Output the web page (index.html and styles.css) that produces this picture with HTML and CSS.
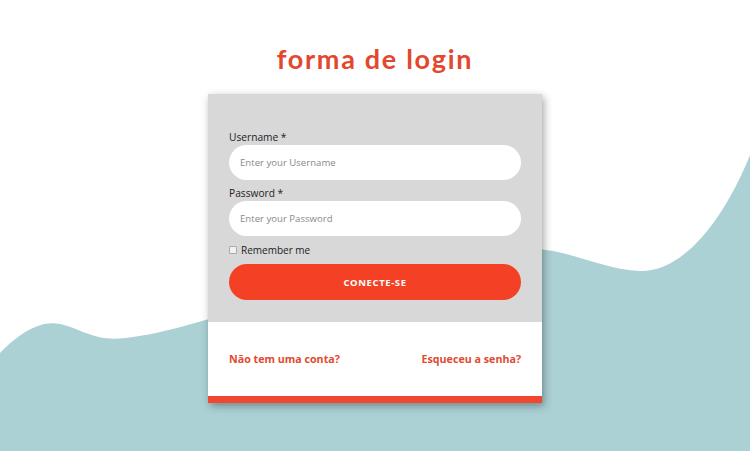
FILE: index.html
```
<!DOCTYPE html>
<html>
<head>
<meta charset="utf-8">
<link rel="stylesheet" href="styles.css">
</head>
<body>
<div class="page">
  <svg class="wave" width="750" height="451" viewBox="0 0 750 451" preserveAspectRatio="none">
    <path d="M0 353 C18 335 38 320 60 324 C80 328 95 342 125 338 C160 334 185 326 240 310 L520 250 C560 244 600 270 640 271 C690 272 730 205 750 155 L750 451 L0 451 Z" fill="#abd1d5"/>
  </svg>
  <h1 class="title">forma de login</h1>
  <div class="card">
    <div class="card-body">
      <label class="label">Username *</label>
      <div class="input">Enter your Username</div>
      <label class="label">Password *</label>
      <div class="input">Enter your Password</div>
      <div class="remember"><span class="box"></span>Remember me</div>
      <div class="button">CONECTE-SE</div>
    </div>
    <div class="card-foot">
      <a class="link">Não tem uma conta?</a>
      <a class="link">Esqueceu a senha?</a>
    </div>
  </div>
</div>
</body>
</html>
```
FILE: styles.css
```
html, body { margin: 0; padding: 0; }
body { background: #fff; font-family: "Open Sans", "Liberation Sans", sans-serif; }
.page { position: relative; width: 750px; height: 451px; overflow: hidden; display: flex; flex-direction: column; align-items: center; }
.wave { position: absolute; left: 0; top: 0; z-index: 0; }
.title { position: relative; z-index: 1; margin: 42px 0 0; height: 52px; font-family: "Lato", "Open Sans", sans-serif; font-weight: 700; font-size: 27px; line-height: 34px; color: #e3472e; letter-spacing: 1.7px; }
.card { position: relative; z-index: 1; width: 334px; background: #fff; border-bottom: 7px solid #f1472e; box-shadow: 2px 3px 8px rgba(0,0,0,0.35); }
.card-body { background: #d8d8d8; padding: 36px 21px 22px; display: flex; flex-direction: column; }
.label { font-size: 10.2px; line-height: 15px; color: #222; display: block; }
.input { height: 35px; border-radius: 18px; background: #fff; display: flex; align-items: center; padding-left: 11px; font-size: 9.6px; color: #8a8a8a; margin-bottom: 6px; }
.remember { display: flex; align-items: center; font-size: 10px; color: #222; height: 15px; margin: 0 0 7px; }
.box { width: 6px; height: 6px; border: 1px solid #aaa; border-radius: 1px; background: #f2f2f2; margin-right: 4px; }
.button { height: 36px; border-radius: 18px; background: #f44126; color: #fff; font-weight: 700; font-size: 9.5px; letter-spacing: 0.6px; display: flex; align-items: center; justify-content: center; }
.card-foot { height: 74px; padding: 0 21px; display: flex; align-items: center; justify-content: space-between; }
.link { font-weight: 700; font-size: 10.7px; color: #e24a31; }
```
